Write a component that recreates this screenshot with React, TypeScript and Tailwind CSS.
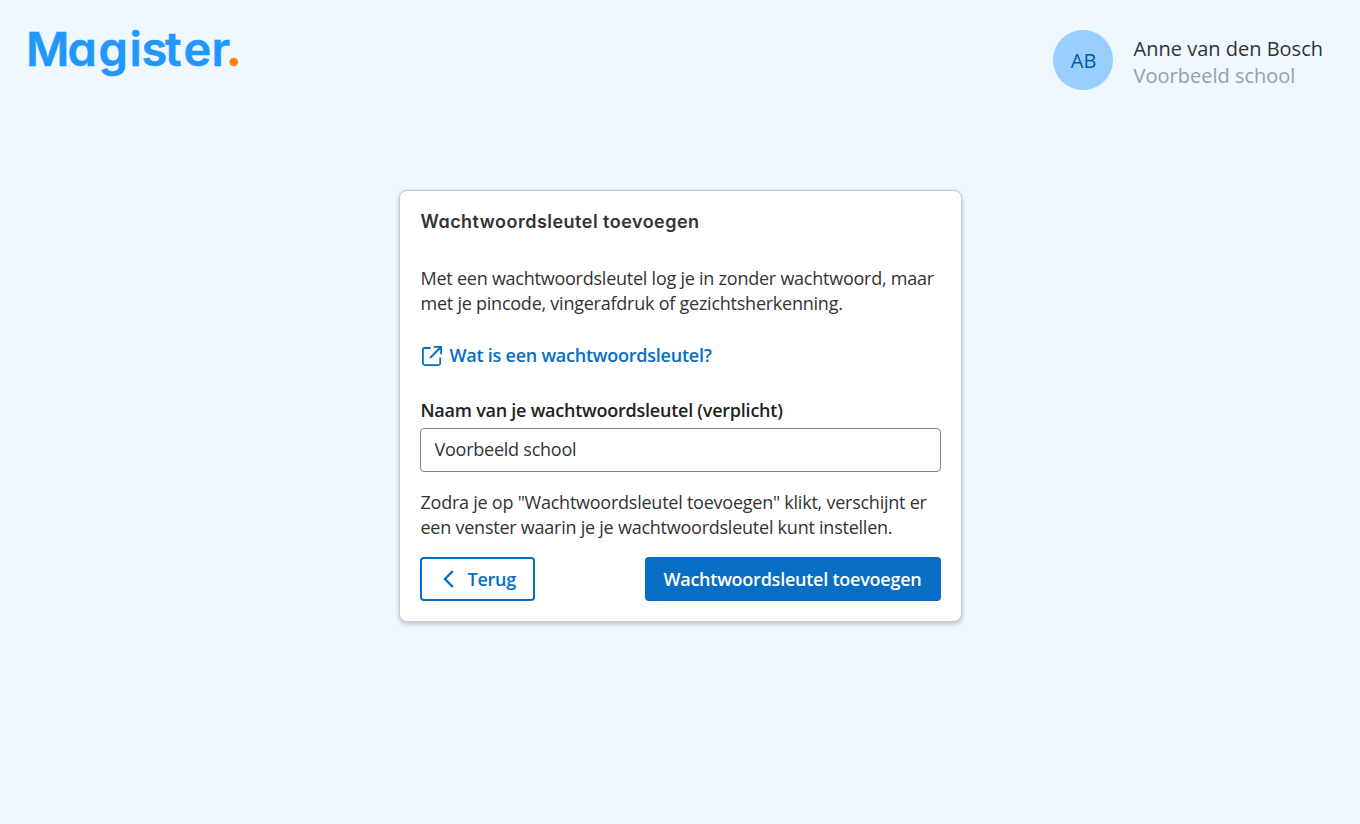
const user = {
  initials: 'AB',
  name: 'Anne van den Bosch',
  school: 'Voorbeeld school',
};

function Logo() {
  return (
    <svg width="220" height="60" viewBox="0 0 220 60" className="shrink-0 overflow-visible" role="img" aria-label="Magister">
      <text
        x="2 43.500 74.500 105.500 117.600 141 159.500 187.500"
        y="42"
        fill="#2196fb"
        stroke="#2196fb"
        strokeWidth="0.5"
        className="font-['Inter',sans-serif] text-[47px] font-semibold [font-feature-settings:'cv11']"
      >
        Magister
      </text>
      <circle cx="209.800" cy="38" r="4.3" fill="#ff7f0a" />
    </svg>
  );
}

function ExternalIcon() {
  return (
    <svg width="22" height="22" viewBox="0 0 22 22" fill="none" stroke="currentColor" strokeWidth="1.800" className="shrink-0">
      <path d="M9.700 3H3.800A2 2 0 0 0 1.900 5v13.300a2 2 0 0 0 1.900 1.900h13.500a2 2 0 0 0 1.900-1.900V12.500" />
      <path d="M12.700 1.900h7.400v7.300M20 2 9 13" />
    </svg>
  );
}

function BackIcon() {
  return (
    <svg width="11" height="18" viewBox="0 0 11 18" fill="none" stroke="currentColor" strokeWidth="2.400" className="shrink-0">
      <path d="M9.800 1 2 9l7.800 8" />
    </svg>
  );
}

export default function App() {
  return (
    <div className="flex h-[824px] flex-col bg-[#eff7ff] font-['Open_Sans',sans-serif] text-[#333]">
      <header className="flex h-[90px] items-start justify-between pt-6 pr-[37px] pl-6">
        <Logo />
        <div className="flex items-center gap-[21px] pt-1.5">
          <div className="flex size-[60px] items-center justify-center rounded-full bg-[#98cfff] pt-0.5 pl-0.5 text-[20px] text-[#0659a5]">
            {user.initials}
          </div>
          <div className="pt-1 text-[20px] leading-[27px] whitespace-nowrap">
            <p>{user.name}</p>
            <p className="text-[#999fa5]">{user.school}</p>
          </div>
        </div>
      </header>

      <main className="mx-auto mt-[100px] h-[432px] w-[563px] rounded-lg border border-[#c8c8c8] bg-white px-5 pt-[17px] text-[18px] leading-[25px] tracking-[-0.24px] shadow-[0_2px_5px_rgba(0,0,0,0.22)]">
        <h1 className="pl-px font-['Inter',sans-serif] text-[18px] leading-7 font-semibold tracking-[0.48px] [font-feature-settings:'cv11']">
          Wachtwoordsleutel toevoegen
        </h1>

        <p className="mt-[30px] pl-px whitespace-nowrap">
          Met een wachtwoordsleutel log je in zonder wachtwoord, maar
          <br />
          met je pincode, vingerafdruk of gezichtsherkenning.
        </p>

        <a href="#" className="mt-[27px] flex items-center gap-[7px] pl-px font-semibold text-[#066ec4]">
          <ExternalIcon />
          Wat is een wachtwoordsleutel?
        </a>

        <label htmlFor="key-name" className="mt-[30px] block pl-px font-semibold text-[#222]">
          Naam van je wachtwoordsleutel (verplicht)
        </label>
        <input
          id="key-name"
          type="text"
          defaultValue={user.school}
          className="mt-[5px] block h-11 w-full rounded border border-[#828282] px-3.5 pb-0.5"
        />

        <p className="mt-[18px] pl-px whitespace-nowrap">
          Zodra je op "Wachtwoordsleutel toevoegen" klikt, verschijnt er
          <br />
          een venster waarin je je wachtwoordsleutel kunt instellen.
        </p>

        <div className="mt-[17px] flex justify-between font-semibold">
          <button type="button" className="flex h-11 w-[115px] items-center gap-[14px] rounded border-2 border-[#066ec4] pl-[21px] text-[#066ec4]">
            <BackIcon />
            Terug
          </button>
          <button type="button" className="h-11 w-[296px] rounded bg-[#066ec4] text-white">
            Wachtwoordsleutel toevoegen
          </button>
        </div>
      </main>
    </div>
  );
}
